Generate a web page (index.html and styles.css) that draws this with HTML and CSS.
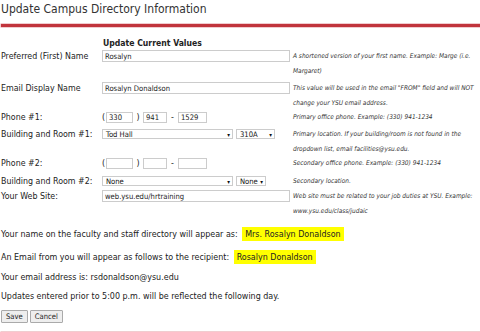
FILE: index.html
```html
<!DOCTYPE html>
<html lang="en">
<head>
<meta charset="utf-8">
<title>Update Campus Directory Information</title>
<link rel="stylesheet" href="styles.css">
</head>
<body>
<div class="page">
  <h1 class="title">Update Campus Directory Information</h1>
  <div class="rule"></div>
  <form class="form">
    <div class="grid">
      <div class="label"></div>
      <div class="field"><span class="section">Update Current Values</span></div>
      <div class="help"></div>

      <div class="label">Preferred (First) Name</div>
      <div class="field"><input class="text wide" type="text" value="Rosalyn"></div>
      <div class="help">A shortened version of your first name. Example: Marge (i.e.<br>Margaret)</div>

      <div class="label">Email Display Name</div>
      <div class="field"><input class="text wide" type="text" value="Rosalyn Donaldson"></div>
      <div class="help">This value will be used in the email "FROM" field and will NOT<br>change your YSU email address.</div>

      <div class="label">Phone #1:</div>
      <div class="field phone"><span class="p open">(</span><input class="text area" type="text" value="330"><span class="p close">)</span><input class="text pre" type="text" value="941"><span class="p dash">-</span><input class="text num" type="text" value="1529"></div>
      <div class="help">Primary office phone. Example: (330) 941-1234</div>

      <div class="label">Building and Room #1:</div>
      <div class="field"><span class="select bld"><span>Tod Hall</span><i>&#9662;</i></span><span class="select room"><span>310A</span><i>&#9662;</i></span></div>
      <div class="help">Primary location. If your building/room is not found in the<br>dropdown list, email facilities@ysu.edu.</div>

      <div class="label">Phone #2:</div>
      <div class="field phone"><span class="p open">(</span><input class="text area" type="text" value=""><span class="p close">)</span><input class="text pre" type="text" value=""><span class="p dash">-</span><input class="text num" type="text" value=""></div>
      <div class="help">Secondary office phone. Example: (330) 941-1234</div>

      <div class="label">Building and Room #2:</div>
      <div class="field"><span class="select bld"><span>None</span><i>&#9662;</i></span><span class="select room2"><span>None</span><i>&#9662;</i></span></div>
      <div class="help">Secondary location.</div>

      <div class="label">Your Web Site:</div>
      <div class="field"><input class="text wide" type="text" value="web.ysu.edu/hrtraining"></div>
      <div class="help">Web site must be related to your job duties at YSU. Example:<br>www.ysu.edu/class/judaic</div>
    </div>

    <p class="line l1">Your name on the faculty and staff directory will appear as: <span class="hl">Mrs. Rosalyn Donaldson</span></p>
    <p class="line l2">An Email from you will appear as follows to the recipient: <span class="hl">Rosalyn Donaldson</span></p>
    <p class="line l3">Your email address is: rsdonaldson@ysu.edu</p>
    <p class="line l4">Updates entered prior to 5:00 p.m. will be reflected the following day.</p>
    <div class="buttons"><button type="button" class="btn">Save</button><button type="button" class="btn">Cancel</button></div>
  </form>
  <div class="rule bottom"></div>
</div>
</body>
</html>
```
FILE: styles.css
```css
html, body { margin: 0; padding: 0; background: #fff; }
body { font-family: "DejaVu Sans Condensed", "DejaVu Sans", sans-serif; color: #222; overflow: hidden; }
.page { padding: 0 0 0 1px; }
.title { margin: 0; padding-top: 2px; height: 22px; font-size: 12px; font-weight: normal; color: #333; line-height: 14px; }
.rule { height: 3px; background: #c1343c; box-shadow: 0 0 0 0.5px #e39aa0; }
.form { margin: 0; }
.grid { display: grid; grid-template-columns: 101px 190px 188px; grid-template-rows: 13px 32px 29px 17px 29px 18px 15px 29px; margin-top: 9px; align-items: start; }
.label { font-size: 8.8px; line-height: 14.5px; color: #222; }
.section { font-weight: bold; font-size: 8.6px; line-height: 13px; display: block; padding-left: 1px; color: #222; }
.help { font-size: 6.5px; font-style: italic; line-height: 14.5px; color: #333; padding-left: 1px; white-space: nowrap; }
.field { display: flex; align-items: center; height: 14.5px; }
.text { box-sizing: border-box; height: 12px; border: 1px solid #ccc; padding: 0 2px; font-family: inherit; font-size: 7.6px; color: #222; margin: 0; background: #fff; }
.wide { width: 188px; }
.phone .text { height: 11px; }
.p { font-size: 8.8px; text-align: center; }
.open { width: 4px; text-align: left; }
.close { width: 10px; }
.dash { width: 11px; }
.area { width: 27px; }
.pre { width: 24px; }
.num { width: 29px; }
.select { box-sizing: border-box; display: inline-flex; align-items: center; justify-content: space-between; height: 10px; border: 1px solid #ccc; padding: 0 2px 0 3px; font-size: 7.6px; background: #fff; color: #111; }
.select i { font-style: normal; font-size: 6px; }
.bld { width: 131px; }
.room { width: 39px; margin-left: 3px; }
.room2 { width: 30px; margin-left: 3px; }
.line { margin: 0; font-size: 8.9px; line-height: 14px; color: #222; }
.l1 { margin-top: 9px; }
.l2 { margin-top: 9px; }
.l3 { margin-top: 6px; }
.l4 { margin-top: 5px; }
.hl { background: #ffff00; padding: 0 3px; display: inline-block; line-height: 14px; margin-left: 2px; }
.buttons { display: flex; gap: 2px; margin-top: 7px; }
.btn { box-sizing: border-box; height: 13px; padding: 0 4px; font-family: inherit; font-size: 7.6px; border: 1px solid #aaa; background: #eee; color: #222; border-radius: 1px; }
.bottom { margin-top: 9px; height: 2px; }
```
